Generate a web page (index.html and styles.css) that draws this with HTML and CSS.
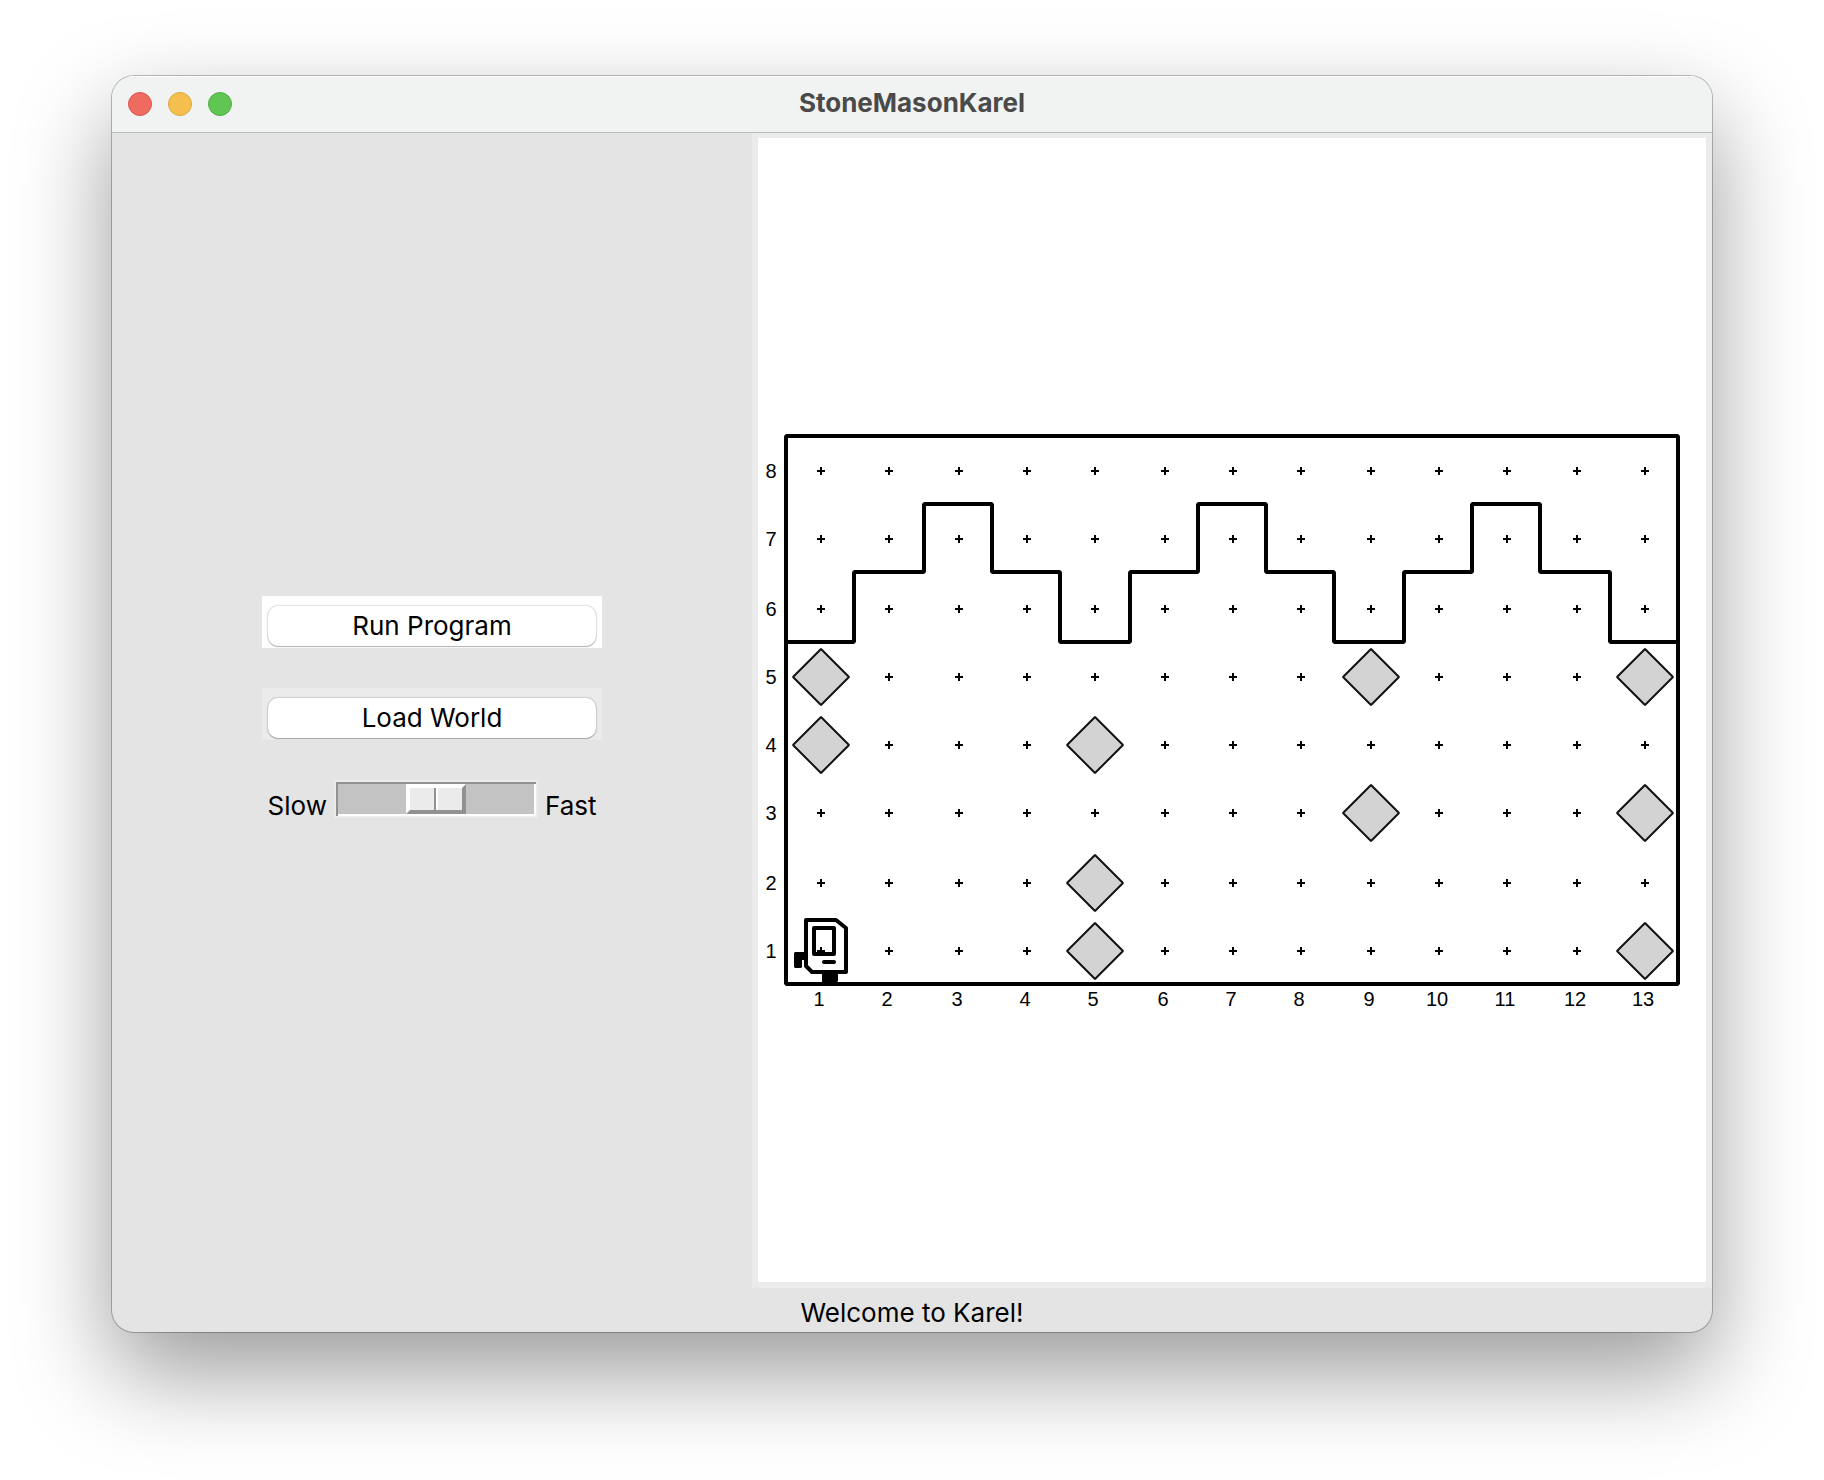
FILE: index.html
```
<!DOCTYPE html>
<html lang="en">
<head>
    <meta charset="UTF-8">
    <meta name="viewport" content="width=device-width, initial-scale=1.0">
    <title>StoneMasonKarel</title>
    <link rel="stylesheet" href="styles.css">
</head>
<body>
    <div class="window">
        <header class="titlebar">
            <div class="lights">
                <button type="button" class="light close" aria-label="Close"></button>
                <button type="button" class="light minimize" aria-label="Minimize"></button>
                <button type="button" class="light zoom" aria-label="Zoom"></button>
            </div>
            <h1>StoneMasonKarel</h1>
        </header>

        <main class="content">
            <!-- Controls -->
            <section class="controls">
                <div class="btn-box active">
                    <button type="button" class="btn">Run Program</button>
                </div>
                <div class="btn-box">
                    <button type="button" class="btn">Load World</button>
                </div>
                <div class="speed">
                    <label for="speed">Slow</label>
                    <input type="range" id="speed" min="0" max="100" value="50">
                    <label for="speed">Fast</label>
                </div>
            </section>

            <!-- World -->
            <section class="world">
                <div class="canvas">
                    <svg viewBox="0 0 948 600" role="img" aria-label="Karel world, 13 by 8">
                        <defs>
                            <path id="corners" d="M59 0h8M63 -4v8M127 0h8M131 -4v8M197 0h8M201 -4v8M265 0h8M269 -4v8M333 0h8M337 -4v8M403 0h8M407 -4v8M471 0h8M475 -4v8M539 0h8M543 -4v8M609 0h8M613 -4v8M677 0h8M681 -4v8M745 0h8M749 -4v8M815 0h8M819 -4v8M883 0h8M887 -4v8"/>
                            <path id="beeper" d="M0 -28L28 0L0 28L-28 0Z"/>
                        </defs>

                        <g class="corners">
                            <use href="#corners" y="61"/>
                            <use href="#corners" y="129"/>
                            <use href="#corners" y="199"/>
                            <use href="#corners" y="267"/>
                            <use href="#corners" y="335"/>
                            <use href="#corners" y="403"/>
                            <use href="#corners" y="473"/>
                            <use href="#corners" y="541"/>
                        </g>

                        <g class="walls">
                            <path d="M28 26H920V574H28Z"/>
                            <path d="M28 232H96V162H166V94H234V162H302V232H372V162H440V94H508V162H576V232H646V162H714V94H782V162H852V232H920"/>
                        </g>

                        <g class="beepers">
                            <use href="#beeper" x="63" y="267"/>
                            <use href="#beeper" x="613" y="267"/>
                            <use href="#beeper" x="887" y="267"/>
                            <use href="#beeper" x="63" y="335"/>
                            <use href="#beeper" x="337" y="335"/>
                            <use href="#beeper" x="613" y="403"/>
                            <use href="#beeper" x="887" y="403"/>
                            <use href="#beeper" x="337" y="473"/>
                            <use href="#beeper" x="337" y="541"/>
                            <use href="#beeper" x="887" y="541"/>
                        </g>

                        <g class="karel">
                            <path d="M48 510H78L88 518V562H54L48 556Z"/>
                            <path d="M56 518H76V544H56Z"/>
                            <path d="M66 552H76"/>
                            <path class="limb" d="M37 542H48V550H44V557L43 558H37L36 557V543Z"/>
                            <path class="limb" d="M64 563H80V571L79 572H64Z"/>
                        </g>

                        <g class="labels">
                            <text x="13" y="68">8</text>
                            <text x="13" y="136">7</text>
                            <text x="13" y="206">6</text>
                            <text x="13" y="274">5</text>
                            <text x="13" y="342">4</text>
                            <text x="13" y="410">3</text>
                            <text x="13" y="480">2</text>
                            <text x="13" y="548">1</text>

                            <text x="61" y="596">1</text>
                            <text x="129" y="596">2</text>
                            <text x="199" y="596">3</text>
                            <text x="267" y="596">4</text>
                            <text x="335" y="596">5</text>
                            <text x="405" y="596">6</text>
                            <text x="473" y="596">7</text>
                            <text x="541" y="596">8</text>
                            <text x="611" y="596">9</text>
                            <text x="679" y="596">10</text>
                            <text x="747" y="596">11</text>
                            <text x="817" y="596">12</text>
                            <text x="885" y="596">13</text>
                        </g>
                    </svg>
                </div>
            </section>
        </main>

        <footer class="status">Welcome to Karel!</footer>
    </div>
</body>
</html>
```
FILE: styles.css
```
* { box-sizing: border-box; }
body {
    margin: 0;
    min-height: 100vh;
    padding: 76px 112px 148px;
    display: flex;
    background: #fff;
    color: #000;
    font-family: Inter, "Liberation Sans", sans-serif;
    font-size: 26px;
    line-height: 32px;
}
.window {
    flex: 1;
    display: flex;
    flex-direction: column;
    background: #e4e4e4;
    border-radius: 22px;
    overflow: hidden;
    box-shadow: 0 0 0 1px rgba(0, 0, 0, 0.25), 0 40px 96px rgba(0, 0, 0, 0.4);
}

/* Title bar */
.titlebar {
    height: 56px;
    padding: 0 16px;
    display: grid;
    grid-template-columns: 1fr auto 1fr;
    align-items: center;
    background: #f1f3f2;
    box-shadow: inset 0 1px 0 #fff;
}
.titlebar h1 { margin: 0; padding-bottom: 2px; font-size: 26px; font-weight: 700; color: #4a4a4a; }
.lights { display: flex; gap: 16px; }
.light { width: 24px; height: 24px; padding: 0; border: 1px solid; border-radius: 50%; }
.close { background: #ed6b5f; border-color: #d9574c; }
.minimize { background: #f5bf4f; border-color: #dba63c; }
.zoom { background: #61c554; border-color: #50ad42; }

.content { flex: 1; display: grid; grid-template-columns: 2fr 3fr; border-top: 1px solid #bbbdbc; }

/* Controls */
.controls {
    display: flex;
    flex-direction: column;
    align-items: center;
    justify-content: center;
    gap: 40px;
    padding: 0 16px;
}
.btn-box { width: 340px; max-width: 100%; padding: 10px 6px 2px; background: #ebebeb; }
.btn-box.active { background: #fff; }
.btn {
    display: block;
    width: 100%;
    height: 40px;
    padding: 0;
    border: none;
    border-radius: 10px;
    background: #fff;
    color: #000;
    font: inherit;
    box-shadow: 0 0 1px 1px rgba(0, 0, 0, 0.12), 0 1px 1px rgba(0, 0, 0, 0.22);
}
.speed { display: flex; align-items: flex-start; gap: 7px; padding-bottom: 3px; }
.speed label { padding-top: 10px; }
#speed {
    appearance: none;
    width: 204px;
    height: 38px;
    margin: 0;
    padding: 2px;
    border: 2px solid #ebebeb;
    background: #c3c3c3;
    box-shadow: inset 2px 2px 0 #919191, inset -2px -2px 0 #fff;
}
#speed::-webkit-slider-thumb {
    appearance: none;
    width: 60px;
    height: 30px;
    border: 4px solid #919191;
    border-top-color: #fff;
    border-left-color: #fff;
    background: linear-gradient(90deg, #ebebeb 24px, #919191 24px, #919191 26px, #fff 26px, #fff 28px, #ebebeb 28px);
}

/* World */
.world { padding: 5px 6px 6px; background: #ebebeb; }
.canvas { height: 100%; display: flex; align-items: center; background: #fff; }
.canvas svg { display: block; width: 100%; }
.corners { stroke: #000; stroke-width: 2; }
.walls { fill: none; stroke: #000; stroke-width: 4; stroke-linejoin: bevel; }
.beepers { fill: #d3d3d3; stroke: #111; stroke-width: 2; stroke-linejoin: bevel; }
.karel { fill: none; stroke: #000; stroke-width: 4; stroke-linejoin: round; stroke-linecap: round; }
.karel .limb { fill: #000; stroke: none; }
.labels { font-family: "Liberation Sans", Arial, sans-serif; font-size: 20px; text-anchor: middle; }

.status { height: 44px; padding-top: 9px; text-align: center; }
```
